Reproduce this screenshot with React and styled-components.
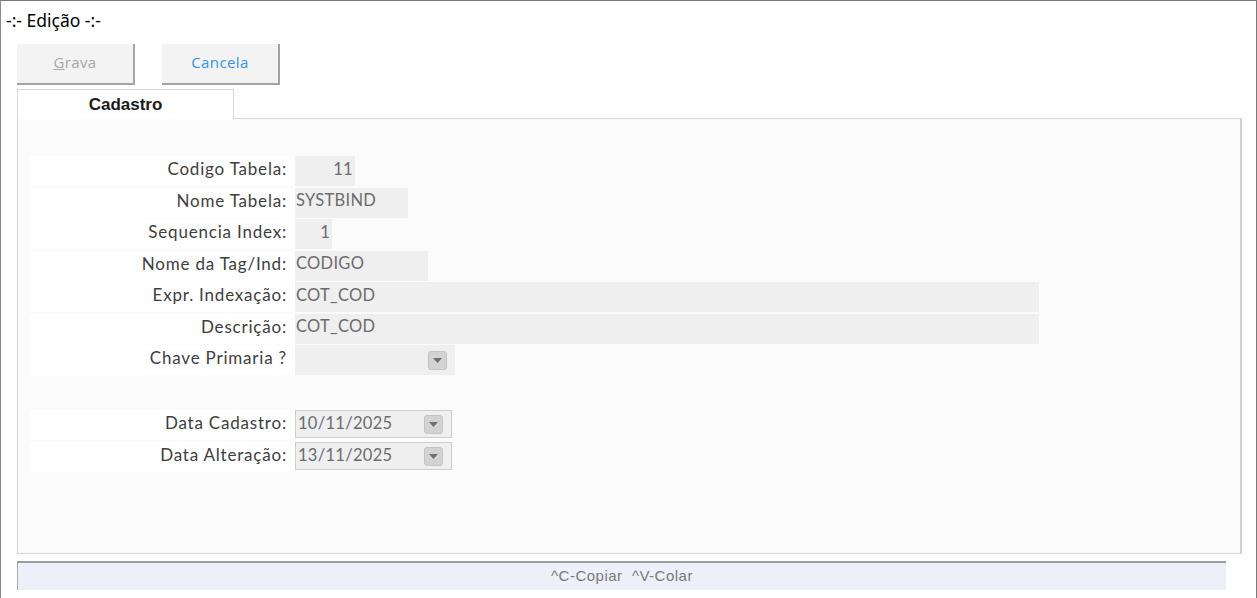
import React from "react"
import styled, { createGlobalStyle } from "styled-components"

const GlobalStyle = createGlobalStyle`
  html, body {
    margin: 0;
    padding: 0;
    background: #ffffff;
  }
  * {
    box-sizing: border-box;
  }
`

const Window = styled.div`
  width: 1257px;
  height: 598px;
  border-top: 1px solid #7a7a7a;
  border-left: 1px solid #8a8a8a;
  border-right: 1px solid #7a7a7a;
  background: #ffffff;
  display: flex;
  flex-direction: column;
  padding-left: 16px;
`

const Title = styled.div`
  height: 43px;
  margin-left: -11px;
  padding-top: 7px;
  font-family: "Noto Sans", "Open Sans", sans-serif;
  font-size: 17.5px;
  line-height: 24px;
  color: #000;
`

const Toolbar = styled.div`
  display: flex;
  gap: 27px;
  height: 41px;
`

const Button = styled.button`
  width: 118px;
  height: 41px;
  padding: 0 0 4px;
  background: #f3f3f3;
  border: none;
  border-right: 2px solid #a3a3a3;
  border-bottom: 2px solid #a3a3a3;
  font-family: "Open Sans", "Noto Sans", sans-serif;
  font-size: 15px;
  letter-spacing: 0.4px;
  color: ${(p) => (p.disabled ? "#a6a6a6" : "#2f97ee")};
  cursor: ${(p) => (p.disabled ? "default" : "pointer")};

  u {
    text-decoration: underline;
  }
`

const Tabs = styled.div`
  display: flex;
  margin-top: 4px;
`

const Tab = styled.div`
  width: 217px;
  height: 30px;
  border: 1px solid #d6d6d6;
  border-bottom: none;
  background: #ffffff;
  font-family: "Liberation Sans", Arial, sans-serif;
  font-weight: bold;
  font-size: 17px;
  line-height: 29px;
  text-align: center;
  color: #1a1a1a;
  position: relative;
  z-index: 1;
  margin-bottom: -1px;
`

const Panel = styled.div`
  width: 1225px;
  height: 436px;
  border: 1px solid #d6d6d6;
  border-right: 2px solid #d0d0d0;
  background: #fbfbfb;
  padding: 37px 0 0 12px;
`

const Form = styled.div`
  display: flex;
  flex-direction: column;
  gap: 1.5px;
`

const Group = styled(Form)`
  margin-top: ${(p) => p.$top || 0}px;
  gap: 2px;
`

const Row = styled.div`
  display: flex;
  height: 30px;
`

const Label = styled.div`
  width: 265px;
  background: #ffffff;
  padding: 0 8px 5px 0;
  display: flex;
  align-items: center;
  justify-content: flex-end;
  font-family: Lato, "Open Sans", sans-serif;
  font-size: 17px;
  letter-spacing: 0.8px;
  color: #3e3e3e;
  white-space: nowrap;
`

const Field = styled.div`
  width: ${(p) => p.$w}px;
  height: ${(p) => (p.$boxed ? 28 : 30)}px;
  background: #efefef;
  border: ${(p) => (p.$boxed ? "1px solid #cdcdcd" : "none")};
  display: flex;
  align-items: center;
  justify-content: ${(p) => (p.$right ? "flex-end" : "space-between")};
  padding: 0 ${(p) => (p.$right ? 2 : 8)}px ${(p) => (p.$boxed ? 2 : 5)}px
    ${(p) => (p.$boxed ? 2 : 1)}px;
  font-family: Lato, "Open Sans", sans-serif;
  font-size: 16.5px;
  letter-spacing: 0.3px;
  color: #6c6c6c;
  white-space: nowrap;
`

const Drop = styled.span`
  width: 19px;
  height: 19px;
  margin-top: ${(p) => (p.$low ? 5 : 2)}px;
  border-radius: 3px;
  background: #d3d3d3;
  border: 1px solid #c4c4c4;
  display: flex;
  align-items: center;
  justify-content: center;
`

const StatusBar = styled.div`
  width: 1209px;
  height: 29px;
  margin-top: 7px;
  background: #eeeff9;
  border-top: 2px solid #9c9c9c;
  border-left: 1px solid #a8a8a8;
  font-family: "Liberation Sans", Arial, sans-serif;
  font-size: 15px;
  letter-spacing: 0.5px;
  line-height: 26px;
  text-align: center;
  color: #7a7a7a;
  white-space: pre;
`

const Arrow = () => (
  <svg width="9" height="5" viewBox="0 0 9 5">
    <path d="M0 0 H9 L4.5 5 Z" fill="#6f6f6f" />
  </svg>
)

const fields = [
  { label: "Codigo Tabela:", value: "11", w: 60, right: true },
  { label: "Nome Tabela:", value: "SYSTBIND", w: 113 },
  { label: "Sequencia Index:", value: "1", w: 37, right: true },
  { label: "Nome da Tag/Ind:", value: "CODIGO", w: 133 },
  { label: "Expr. Indexação:", value: "COT_COD", w: 744 },
  { label: "Descrição:", value: "COT_COD", w: 744 },
  { label: "Chave Primaria ?", value: "", w: 160, drop: true },
]

const dates = [
  { label: "Data Cadastro:", value: "10/11/2025" },
  { label: "Data Alteração:", value: "13/11/2025" },
]

const App = () => (
  <>
    <GlobalStyle />
    <Window>
      <Title>-:- Edição -:-</Title>
      <Toolbar>
        <Button disabled>
          <u>G</u>rava
        </Button>
        <Button>Cancela</Button>
      </Toolbar>
      <Tabs>
        <Tab>Cadastro</Tab>
      </Tabs>
      <Panel>
        <Form>
          {fields.map((f) => (
            <Row key={f.label}>
              <Label>{f.label}</Label>
              <Field $w={f.w} $right={f.right}>
                <span>{f.value}</span>
                {f.drop && (
                  <Drop $low>
                    <Arrow />
                  </Drop>
                )}
              </Field>
            </Row>
          ))}
        </Form>
        <Group $top={35}>
          {dates.map((d) => (
            <Row key={d.label}>
              <Label>{d.label}</Label>
              <Field $w={157} $boxed>
                <span>{d.value}</span>
                <Drop>
                  <Arrow />
                </Drop>
              </Field>
            </Row>
          ))}
        </Group>
      </Panel>
      <StatusBar>{"^C-Copiar  ^V-Colar"}</StatusBar>
    </Window>
  </>
)

export default App
